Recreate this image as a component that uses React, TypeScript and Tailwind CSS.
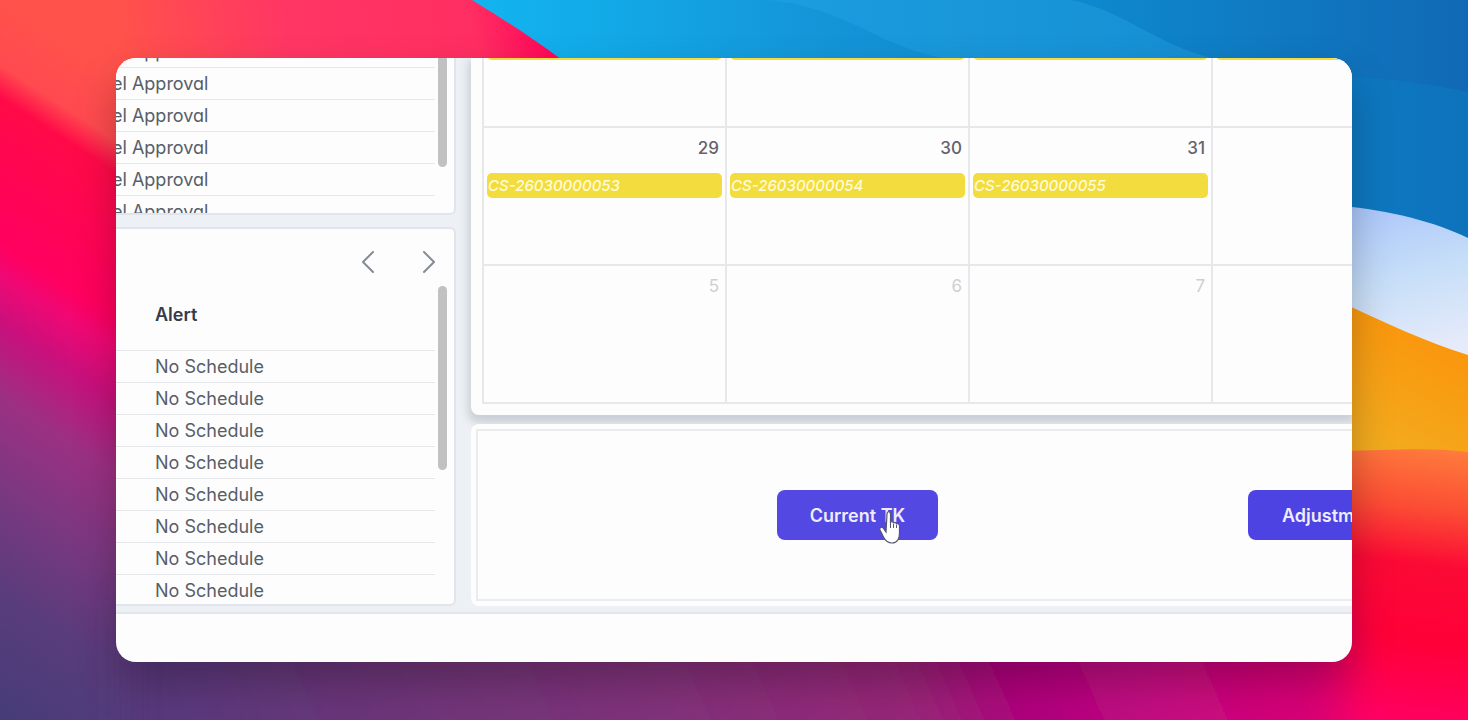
type CalendarDay = {
  day: number;
  event?: string;
  muted?: boolean;
};

const approvals = Array(6).fill("el Approval");
const alerts = Array(8).fill("No Schedule");

const weeks: CalendarDay[][] = [
  [
    { day: 22, event: "CS-26030000046" },
    { day: 23, event: "CS-26030000047" },
    { day: 24, event: "CS-26030000048" },
    { day: 25, event: "CS-26030000049" },
  ],
  [
    { day: 29, event: "CS-26030000053" },
    { day: 30, event: "CS-26030000054" },
    { day: 31, event: "CS-26030000055" },
    { day: 1, muted: true },
  ],
  [
    { day: 5, muted: true },
    { day: 6, muted: true },
    { day: 7, muted: true },
    { day: 8, muted: true },
  ],
];

function Wallpaper() {
  return (
    <svg
      className="absolute inset-0 h-full w-full"
      viewBox="0 0 1468 720"
      preserveAspectRatio="none"
      aria-hidden="true"
    >
      <defs>
        <linearGradient id="left" gradientUnits="userSpaceOnUse" x1="0" y1="0" x2="-329" y2="506">
          <stop offset="0" stopColor="#ff524b" />
          <stop offset=".09" stopColor="#ff4a50" />
          <stop offset=".135" stopColor="#ff0a48" />
          <stop offset=".34" stopColor="#ff0060" />
          <stop offset=".38" stopColor="#f00874" />
          <stop offset=".45" stopColor="#c8107c" />
          <stop offset=".55" stopColor="#9c3083" />
          <stop offset=".68" stopColor="#7a3880" />
          <stop offset=".82" stopColor="#5a3c7c" />
          <stop offset="1" stopColor="#463c78" />
        </linearGradient>
        <linearGradient id="top" gradientUnits="userSpaceOnUse" x1="116" y1="0" x2="550" y2="-60">
          <stop offset="0" stopColor="#ff524b" />
          <stop offset=".38" stopColor="#ff3664" />
          <stop offset=".8" stopColor="#ff2e62" />
          <stop offset="1" stopColor="#ff0057" />
        </linearGradient>
        <linearGradient id="blue" gradientUnits="userSpaceOnUse" x1="480" y1="0" x2="1468" y2="0">
          <stop offset="0" stopColor="#12b4f0" />
          <stop offset=".35" stopColor="#1495d8" />
          <stop offset=".65" stopColor="#0e86cc" />
          <stop offset="1" stopColor="#1169b5" />
        </linearGradient>
        <linearGradient id="bottom" gradientUnits="userSpaceOnUse" x1="116" y1="720" x2="1240" y2="220">
          <stop offset="0" stopColor="#54387c" />
          <stop offset=".2" stopColor="#6c3679" />
          <stop offset=".4" stopColor="#80327a" />
          <stop offset=".6" stopColor="#982678" />
          <stop offset=".68" stopColor="#b0007c" />
          <stop offset=".78" stopColor="#c40c82" />
          <stop offset=".88" stopColor="#d60076" />
          <stop offset="1" stopColor="#fa0868" />
        </linearGradient>
        <linearGradient id="ice" x1="0" y1="0" x2=".2" y2="1">
          <stop offset="0" stopColor="#a9c5fb" />
          <stop offset=".5" stopColor="#c6def8" />
          <stop offset="1" stopColor="#e6ebfa" />
        </linearGradient>
        <linearGradient id="orange" gradientUnits="userSpaceOnUse" x1="1440" y1="320" x2="1370" y2="450">
          <stop offset="0" stopColor="#fb930a" />
          <stop offset="1" stopColor="#f3ac1f" />
        </linearGradient>
        <linearGradient id="red" gradientUnits="userSpaceOnUse" x1="1425" y1="448" x2="1390" y2="720">
          <stop offset="0" stopColor="#ff7a3c" />
          <stop offset=".22" stopColor="#fb4c34" />
          <stop offset=".42" stopColor="#fb0a35" />
          <stop offset=".7" stopColor="#ff0038" />
          <stop offset="1" stopColor="#ff0062" />
        </linearGradient>
        <filter id="soften" filterUnits="userSpaceOnUse" x="0" y="500" width="1468" height="400">
          <feGaussianBlur stdDeviation="20" />
        </filter>
      </defs>
      <rect width="1468" height="720" fill="url(#blue)" />
      <path d="M768 0C850 8 880 50 955 60H1220C1160 48 1120 8 1070 0Z" fill="#27a8e8" opacity=".35" />
      <path d="M1340 76C1390 78 1430 84 1468 92V250H1340Z" fill="#0a82c6" opacity=".4" />
      <path d="M117 0H472C505 20 535 40 562 60V90H117Z" fill="url(#top)" />
      <path d="M0 0H118V560H300V720H0Z" fill="url(#left)" />
      <path d="M1340 206C1390 210 1435 222 1468 238V370H1340Z" fill="url(#ice)" />
      <path d="M1340 302C1385 322 1425 342 1468 355V470H1340Z" fill="url(#orange)" />
      <path d="M1200 451H1340C1390 450 1430 447 1468 452V720H1200Z" fill="url(#red)" />
      <path d="M130 600H1345V800H130Z" fill="url(#bottom)" filter="url(#soften)" />
    </svg>
  );
}

function HandCursor() {
  return (
    <svg
      className="pointer-events-none absolute top-5 left-[102px] h-9 w-[22px]"
      viewBox="0 0 22 36"
      aria-hidden="true"
    >
      <path
        d="M8 4C8 1 11.500 1 11.500 4V13C11.500 11 14.500 11 14.500 13.500C14.500 12 17.500 12 17.500 14.500C17.500 13 20.500 13.500 20.500 16V23C20.500 28 18.500 33 13 33C8 33 6 30 4.500 27L1 20C0 17.500 3 16 4.500 18.500L7 22Z"
        fill="#fff"
        stroke="#55566f"
        strokeWidth="1.200"
      />
      <path d="M11.500 13V18M14.500 14V18M17.500 15V18" stroke="#55566f" strokeWidth="1" />
    </svg>
  );
}

function Chevron({ label, path }: { label: string; path: string }) {
  return (
    <button type="button" aria-label={label} className="flex w-[14px] justify-center">
      <svg className="h-6 w-[14px]" viewBox="0 0 14 24" fill="none" stroke="#868b98" strokeWidth="2" strokeLinecap="round" strokeLinejoin="round">
        <path d={path} />
      </svg>
    </button>
  );
}

function ApprovalPanel() {
  return (
    <section className="flex h-[157px] items-start gap-[3px] overflow-hidden rounded-br-md border-r-2 border-b-2 border-[#dfe5eb] bg-[#fdfdfd] pr-[7px]">
      <table className="-mt-[22px] flex-1 border-collapse">
        <tbody className="block">
          {approvals.map((text, index) => (
            <tr key={index} className="flex h-8 items-center border-b border-[#e6e7ea]">
              <td className="-indent-1 whitespace-nowrap">{text}</td>
            </tr>
          ))}
        </tbody>
      </table>
      <div className="h-[109px] w-[9px] rounded-b-full bg-[#c1c1c1]" />
    </section>
  );
}

function AlertPanel() {
  return (
    <section className="h-[380px] overflow-hidden rounded-r-md border-2 border-l-0 border-[#dfe5eb] bg-[#fdfdfd]">
      <div className="flex h-[57px] items-end justify-end gap-[47px] pr-[18px] pb-3">
        <Chevron label="Previous" path="M12 2L2 12L12 22" />
        <Chevron label="Next" path="M2 2L12 12L2 22" />
      </div>
      <div className="flex items-start gap-[3px] pr-[7px]">
        <table className="flex flex-1 flex-col border-collapse">
          <thead className="block">
            <tr className="flex h-[65px] items-center border-b border-[#e6e7ea] pb-[6px]">
              <th className="pl-[39px] text-left font-semibold text-[#343b49]">Alert</th>
            </tr>
          </thead>
          <tbody className="block">
            {alerts.map((text, index) => (
              <tr key={index} className="flex h-8 items-center border-b border-[#e6e7ea]">
                <td className="pl-[39px]">{text}</td>
              </tr>
            ))}
          </tbody>
        </table>
        <div className="h-[184px] w-[9px] rounded-full bg-[#c1c1c1]" />
      </div>
    </section>
  );
}

function Calendar() {
  return (
    <section className="h-[357px] shrink-0 overflow-hidden rounded-bl-lg bg-[#fdfdfd] pl-[11px] shadow-[0_5px_8px_3px_rgba(70,75,90,0.2)]">
      <table className="-mt-[70px] w-[974px] table-fixed border-collapse border-2 border-[#e8e8ea] text-[17px] font-medium">
        <tbody>
          {weeks.map((week, index) => (
            <tr key={index} className="h-[138px]">
              {week.map(({ day, event, muted }) => (
                <td key={day} className="border-2 border-[#e8e8ea] px-[3px] pt-2 align-top">
                  <p className={muted ? "pr-[3px] text-right leading-6 font-normal text-[#cfcfd2]" : "pr-[3px] text-right leading-6 text-[#62636e]"}>
                    {day}
                  </p>
                  {event && (
                    <div className="mt-[13px] h-[25px] rounded-[5px] bg-[#f3dd3e] pl-px text-[15px] leading-[25px] text-[#fffbd8] italic">
                      {event}
                    </div>
                  )}
                </td>
              ))}
            </tr>
          ))}
        </tbody>
      </table>
    </section>
  );
}

function Actions() {
  return (
    <section className="mt-[9px] flex-1 rounded-l-lg bg-[#fdfdfd] py-[5px] pl-[5px] relative">
      <div className="flex h-full items-center gap-[310px] border-2 border-r-0 border-[#ebecef] pl-[299px]">
        <div className="relative shrink-0">
          <button type="button" className="h-[50px] w-[161px] rounded-lg bg-[#5448e2] font-semibold text-[#eeedff]">
            Current TK
          </button>
          <HandCursor />
        </div>
        <button type="button" className="h-[50px] shrink-0 rounded-lg bg-[#4d42e2] px-[34px] font-semibold text-[#eeedff]">
          Adjustment
        </button>
      </div>
    </section>
  );
}

function App() {
  return (
    <div className="relative flex h-screen overflow-hidden px-[116px] py-[58px] font-['Inter',sans-serif] text-[18px] text-[#575d69]">
      <Wallpaper />
      <main className="relative flex min-w-0 flex-1 flex-col rounded-[20px] shadow-[0_20px_40px_rgba(0,0,0,0.25)]">
        <div className="flex min-h-0 flex-1 flex-col overflow-hidden rounded-[20px] bg-[#fdfdfd] [font-feature-settings:'cv11']">
          <div className="flex min-h-0 flex-1 gap-[15px] border-b-2 border-[#e3e6eb] bg-[#edf1f5] pb-[6px]">
            <div className="flex w-[340px] shrink-0 flex-col gap-3">
              <ApprovalPanel />
              <AlertPanel />
            </div>
            <div className="flex min-w-0 flex-1 flex-col">
              <Calendar />
              <Actions />
            </div>
          </div>
          <footer className="h-12 shrink-0" />
        </div>
      </main>
    </div>
  );
}

export default App;
